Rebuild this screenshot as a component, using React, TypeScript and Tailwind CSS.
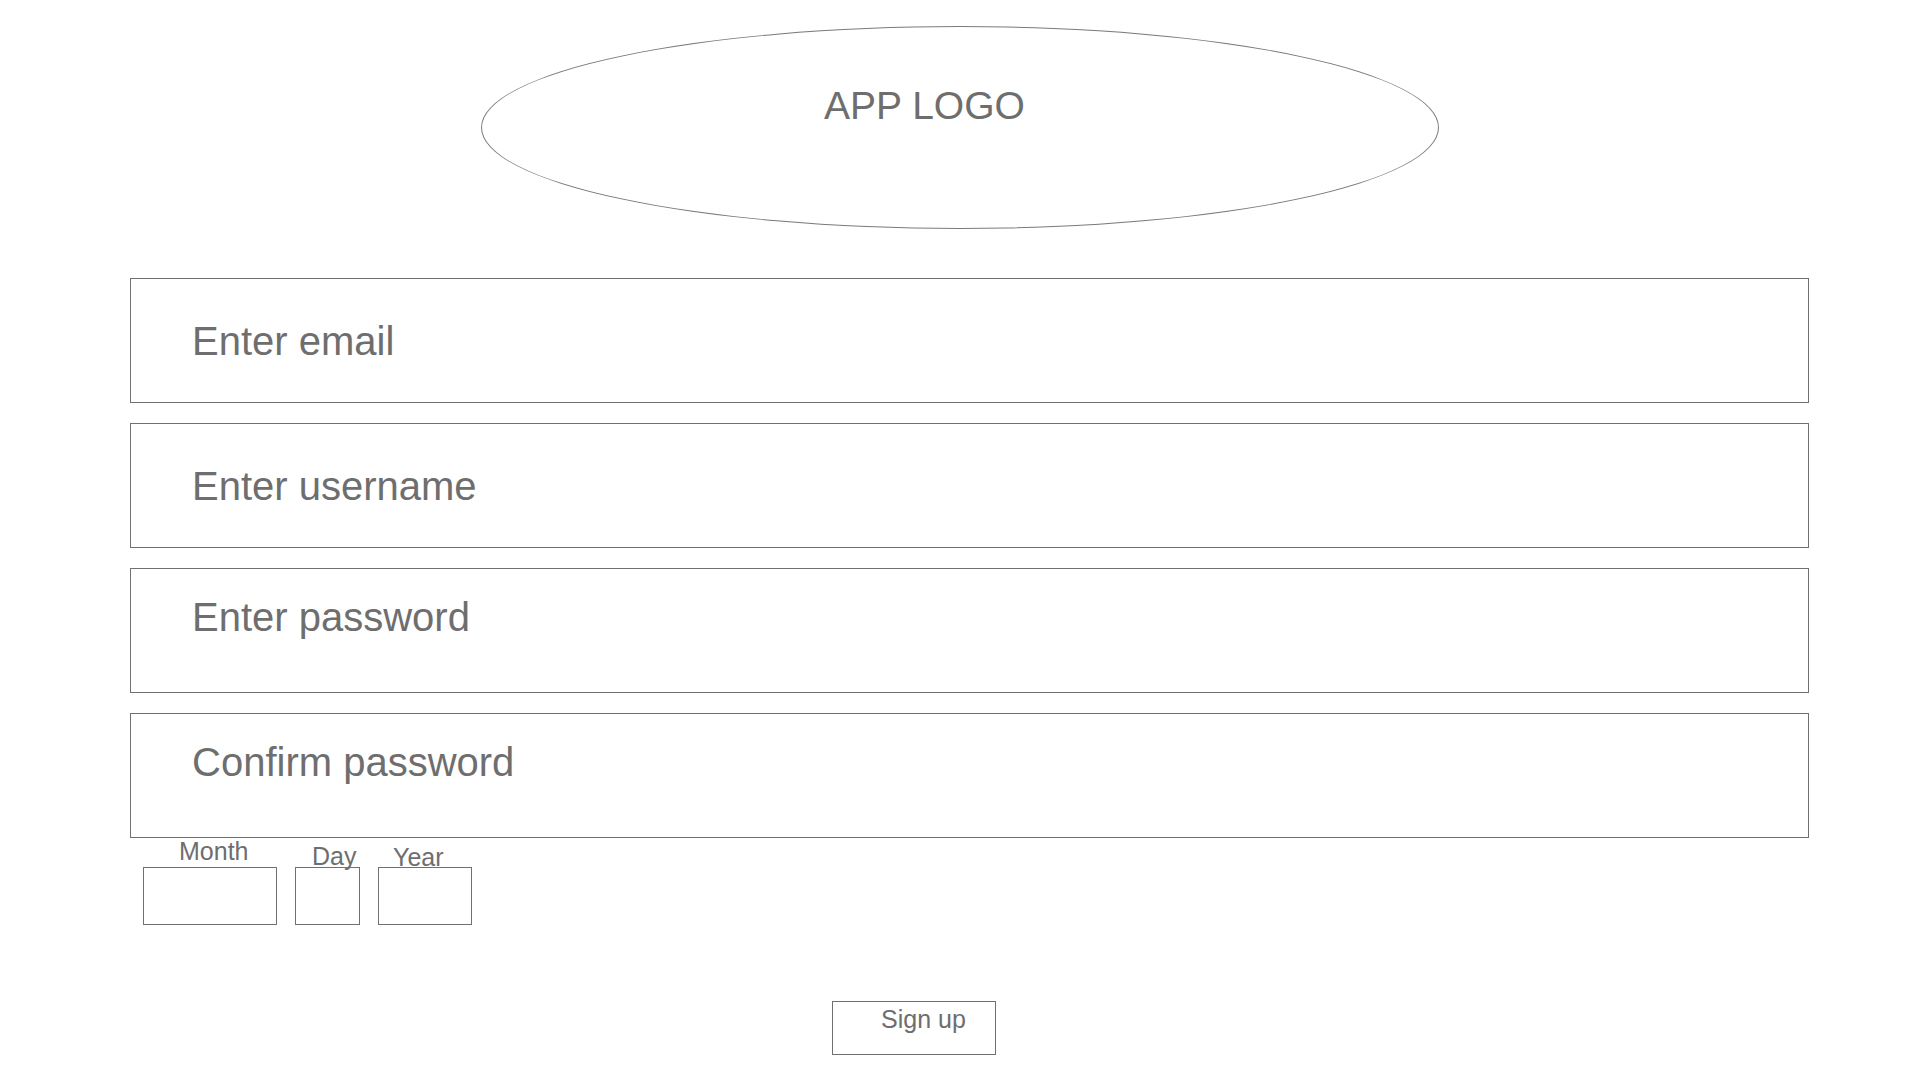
const fields = [
  { label: 'Enter email', raised: false },
  { label: 'Enter username', raised: false },
  { label: 'Enter password', raised: true },
  { label: 'Confirm password', raised: true },
];

function Field({ label, raised }: { label: string; raised: boolean }) {
  return (
    <div
      className={
        'flex items-center h-[125px] w-[1679px] border border-[#707070] pl-[61px] ' +
        (raised ? 'pb-[27px]' : '')
      }
    >
      <span className="text-[40px] leading-none text-[#6e6e6e]">{label}</span>
    </div>
  );
}

function DateBox({ label, width, labelLeft, labelTop }: { label: string; width: string; labelLeft: string; labelTop: string }) {
  return (
    <div className="flex flex-col">
      <div className={'h-[28px] ' + labelLeft + ' ' + labelTop}>
        <span className="block text-[25px] leading-none text-[#6e6e6e]">{label}</span>
      </div>
      <div className={'h-[58px] border border-[#707070] ' + width} />
    </div>
  );
}

export default function App() {
  return (
    <div className="min-h-screen w-full bg-white pt-[26px] font-['Liberation_Sans',Arial,sans-serif]">
      {/* logo */}
      <div className="ml-[481px] w-[958px] h-[203px] rounded-[50%] border border-[#7a7a7a] pl-[342px] pt-[59px]">
        <span className="text-[39px] leading-none text-[#6e6e6e]">APP LOGO</span>
      </div>

      <div className="ml-[130px] mt-[49px] flex flex-col gap-[20px]">
        {fields.map((f) => (
          <Field key={f.label} label={f.label} raised={f.raised} />
        ))}
      </div>

      <div className="ml-[143px] mt-px flex gap-[18px]">
        <DateBox label="Month" width="w-[134px]" labelLeft="pl-[36px]" labelTop="pt-0" />
        <DateBox label="Day" width="w-[65px]" labelLeft="pl-[17px]" labelTop="pt-[5px]" />
        <DateBox label="Year" width="w-[94px]" labelLeft="pl-[15px]" labelTop="pt-[6px]" />
      </div>

      <button className="ml-[832px] mt-[76px] flex h-[54px] w-[164px] items-start border border-[#707070] pl-[48px] pt-[5px]">
        <span className="text-[25px] leading-none text-[#6e6e6e]">Sign up</span>
      </button>
    </div>
  );
}
